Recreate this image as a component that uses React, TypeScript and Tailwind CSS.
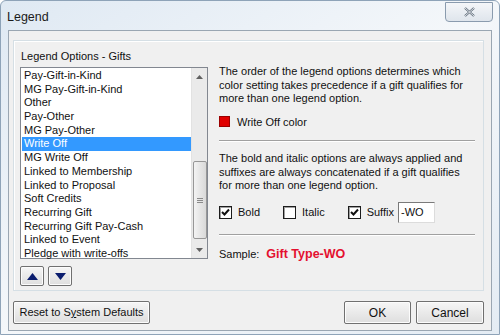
import React from 'react';

const items = [
  "Pay-Gift-in-Kind",
  "MG Pay-Gift-in-Kind",
  "Other",
  "Pay-Other",
  "MG Pay-Other",
  "Write Off",
  "MG Write Off",
  "Linked to Membership",
  "Linked to Proposal",
  "Soft Credits",
  "Recurring Gift",
  "Recurring Gift Pay-Cash",
  "Linked to Event",
  "Pledge with write-offs",
];

const font = { fontFamily: '"Liberation Sans", Arial, sans-serif' };

// small checkbox in the classic windows style
const Check = ({ checked }: { checked: boolean }) => (
  <span className="w-[13px] h-[13px] border border-[#1c1c1c] bg-white flex items-center justify-center shrink-0 shadow-[inset_1px_1px_0_#a0a0a0]">
    {checked && (
      <svg width="9" height="9" viewBox="0 0 9 9">
        <path d="M1 4 L3.5 6.5 L8 1.5" stroke="#111" strokeWidth="2" fill="none" />
      </svg>
    )}
  </span>
);

const Arrow = ({ up }: { up: boolean }) => (
  <svg width="11" height="7" viewBox="0 0 11 7">
    <path d={up ? "M5.5 0 L11 7 L0 7 Z" : "M0 0 L11 0 L5.5 7 Z"} fill="#0b1d6e" />
  </svg>
);

const Btn = ({ children, className }: { children: React.ReactNode; className: string }) => (
  <div
    className={`border border-[#707070] rounded-[2px] bg-gradient-to-b from-[#f6f6f6] to-[#dedede] shadow-[inset_0_0_0_1px_#fcfcfc] flex items-center justify-center text-[#111] whitespace-nowrap ${className}`}
  >
    {children}
  </div>
);

export default function App() {
  return (
    <div
      className="w-[500px] h-[335px] overflow-hidden relative bg-gradient-to-br from-[#dfe9f3] via-[#f4f7fa] to-[#e4ecf4] rounded-t-[6px] border border-[#8ea3b8]"
      style={font}
    >
      {/* title bar */}
      <div className="h-[29px] flex items-start">
        <div className="pl-[6px] pt-[10px] text-[12.5px] text-[#1a1a1a] leading-none">Legend</div>
        <div className="ml-auto mr-[6px] mt-[1px] w-[48px] h-[20px] border border-[#8a9bae] rounded-b-[4px] bg-gradient-to-b from-[#f4f6f9] to-[#dfe5ec] flex items-center justify-center">
          <svg width="11" height="10" viewBox="0 0 11 10">
            <path d="M1 1 L10 9 M10 1 L1 9" stroke="#5d6a79" strokeWidth="2.2" />
            <path d="M1 1 L10 9 M10 1 L1 9" stroke="#ffffff" strokeWidth="0.8" />
          </svg>
        </div>
      </div>

      {/* client area */}
      <div className="ml-[7px] mr-[7px] h-[301px] border border-[#9aa6b2] bg-[#f0f0f0] pt-[9px] pl-[4px] pr-[7px]">
        {/* group box */}
        <div className="h-[251px] border border-[#d5dfe5] shadow-[inset_1px_1px_0_#ffffff] flex pl-[6px] pt-[8px] pr-[8px]">
          {/* left column */}
          <div className="w-[188px] flex flex-col">
            <div className="text-[11px] leading-[14px] text-[#111] pl-[1px]">Legend Options - Gifts</div>
            <div className="mt-[4px] h-[192px] border border-[#828790] bg-white flex">
              <div className="flex-1 pt-[1px] pl-[1px]">
                {items.map((it) => (
                  <div
                    key={it}
                    className={`h-[13.7px] leading-[13.7px] text-[11px] pl-[2px] whitespace-nowrap ${
                      it === "Write Off" ? "bg-[#3399ff] text-white" : "text-[#111]"
                    }`}
                  >
                    {it}
                  </div>
                ))}
              </div>
              {/* scrollbar */}
              <div className="w-[16px] bg-[#eaeaea] border-l border-[#e2e2e2] flex flex-col items-center">
                <div className="h-[17px] flex items-center justify-center">
                  <svg width="7" height="4" viewBox="0 0 7 4"><path d="M0 4 L3.5 0 L7 4 Z" fill="#606060" /></svg>
                </div>
                <div className="h-[76px]" />
                <div className="w-[14px] h-[78px] border border-[#979797] rounded-[2px] bg-gradient-to-r from-[#f3f3f3] to-[#d9d9d9] flex items-center justify-center">
                  <div className="flex flex-col gap-[1px]">
                    <div className="w-[6px] h-[1px] bg-[#8a8a8a]" />
                    <div className="w-[6px] h-[1px] bg-[#8a8a8a]" />
                    <div className="w-[6px] h-[1px] bg-[#8a8a8a]" />
                  </div>
                </div>
                <div className="flex-1 flex items-end justify-center pb-[6px]">
                  <svg width="7" height="4" viewBox="0 0 7 4"><path d="M0 0 L7 0 L3.5 4 Z" fill="#606060" /></svg>
                </div>
              </div>
            </div>
            <div className="mt-[7px] flex gap-[4px]">
              <Btn className="w-[24px] h-[20px]"><Arrow up={true} /></Btn>
              <Btn className="w-[24px] h-[20px]"><Arrow up={false} /></Btn>
            </div>
          </div>

          {/* right column */}
          <div className="ml-[11px] flex-1 flex flex-col text-[11px] text-[#111] pt-[16px]">
            <p className="leading-[13.5px]">
              The order of the legend options determines which color setting takes precedence if a gift qualifies for
              more than one legend option.
            </p>
            <div className="mt-[8px] flex items-center gap-[7px]">
              <span className="w-[11px] h-[11px] bg-[#e00000] border border-[#9a0000]" />
              <span>Write Off color</span>
            </div>
            <div className="mt-[10px] h-[2px] border-t border-[#a0a0a0] border-b border-b-white" />
            <p className="mt-[10px] leading-[13.5px]">
              The bold and italic options are always applied and suffixes are always concatenated if a gift qualifies
              for more than one legend option.
            </p>
            <div className="mt-[9px] flex items-center h-[21px]">
              <Check checked={true} />
              <span className="ml-[6px]">Bold</span>
              <span className="ml-[23px]"><Check checked={false} /></span>
              <span className="ml-[6px]">Italic</span>
              <span className="ml-[23px]"><Check checked={true} /></span>
              <span className="ml-[6px]">Suffix</span>
              <div className="ml-[4px] w-[37px] h-[21px] border border-[#7a7a7a] border-r-[#dcdcdc] border-b-[#dcdcdc] bg-white pl-[2px] leading-[19px]">
                -WO
              </div>
            </div>
            <div className="mt-[11px] h-[2px] border-t border-[#a0a0a0] border-b border-b-white" />
            <div className="mt-[9px] flex items-center">
              <span>Sample:</span>
              <span className="ml-[7px] text-[12.5px] font-bold text-[#e4102f]">Gift Type-WO</span>
            </div>
          </div>
        </div>

        {/* bottom buttons */}
        <div className="mt-[10px] flex">
          <Btn className="w-[137px] h-[23px] text-[11px]">
            <span>
              Reset to S<span className="underline">y</span>stem Defaults
            </span>
          </Btn>
          <Btn className="ml-auto w-[67px] h-[23px] text-[12px]">OK</Btn>
          <Btn className="ml-[5px] w-[68px] h-[23px] text-[12px]">Cancel</Btn>
        </div>
      </div>
    </div>
  );
}
